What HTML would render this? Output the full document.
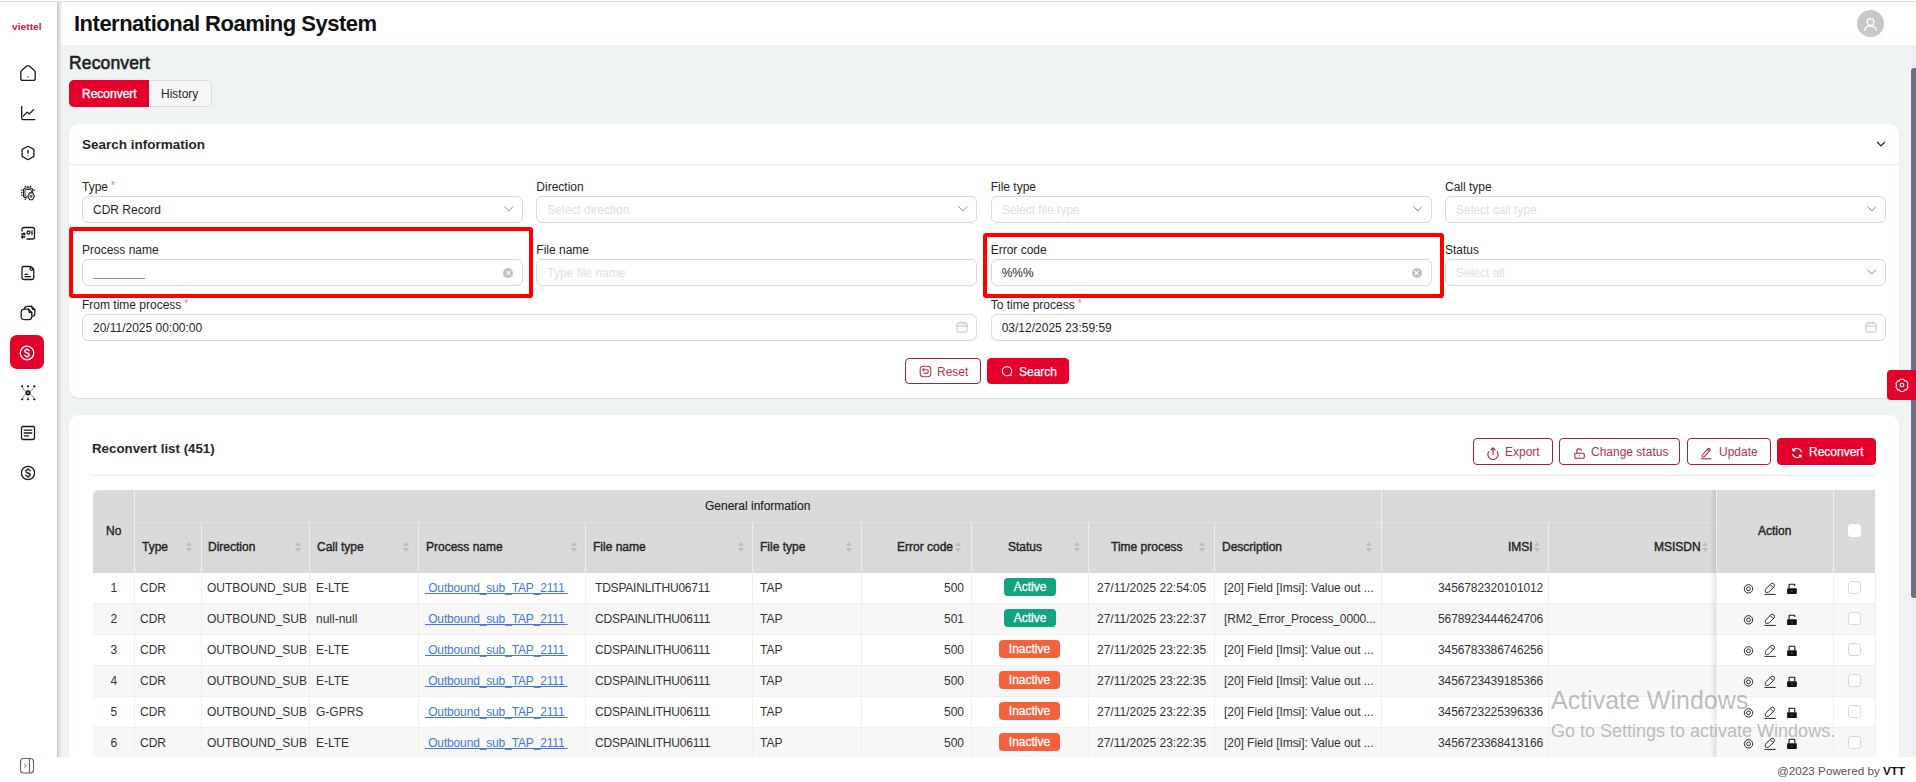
<!DOCTYPE html><html><head><meta charset="utf-8"><style>
*{box-sizing:border-box;margin:0;padding:0}
html,body{width:1916px;height:782px;overflow:hidden;background:#fff;font-family:"Liberation Sans",sans-serif;color:#262626}
.abs{position:absolute}
.t{position:absolute;white-space:nowrap;line-height:1}
.card{position:absolute;background:#fff;border-radius:10px;box-shadow:0 1px 1px rgba(0,0,0,0.09)}
.lbl{position:absolute;font-size:12px;color:#262626;white-space:nowrap;line-height:1}
.req{color:#ee7b7b;font-size:10px;margin-left:3px;position:relative;top:-2px}
.inp{position:absolute;height:27px;border:1px solid #d9d9d9;border-radius:6px;background:#fff;font-size:12px;color:#262626;white-space:nowrap}
.inp span{position:absolute;left:10px;top:7px;line-height:1}
.ph{color:#dde1e4}
.redbox{position:absolute;border:4px solid #fe0000;border-radius:3px}
.btn{position:absolute;height:27px;border-radius:4px;font-size:12px;white-space:nowrap}
.btn-o{border:1px solid #a0213b;color:#b3334d;background:#fff}
.btn-r{background:#e4002b;color:#fff;border:1px solid #e4002b}
.btn span{position:absolute;top:7px;line-height:1}
.chev{position:absolute;width:6px;height:6px;border-right:1px solid #8c8c8c;border-bottom:1px solid #8c8c8c;transform:rotate(45deg)}
.clr{position:absolute;width:10px;height:10px;border-radius:50%;background:#bfbfbf}
.clr:before,.clr:after{content:"";position:absolute;left:4.5px;top:2px;width:1px;height:6px;background:#fff;transform:rotate(45deg)}
.clr:after{transform:rotate(-45deg)}
.th{position:absolute;background:#dadada}
.td{position:absolute;font-size:12px;line-height:1;white-space:nowrap;color:#333}
.vl{position:absolute;width:1px;background:#efefef}
.hl{position:absolute;height:1px;background:#efefef}
.hvl{position:absolute;width:1px;background:#f0f0f0}
.hdr{position:absolute;font-size:12px;font-weight:normal;-webkit-text-stroke:0.4px #262626;line-height:1;white-space:nowrap;color:#262626}
.sort{position:absolute;width:6px;height:10px}
.sort:before{content:"";position:absolute;left:0;top:0;border-left:3px solid transparent;border-right:3px solid transparent;border-bottom:4px solid #bdbdbd}
.sort:after{content:"";position:absolute;left:0;top:6px;border-left:3px solid transparent;border-right:3px solid transparent;border-top:4px solid #bdbdbd}
.badge{position:absolute;height:18px;border-radius:4px;color:#fff;font-size:12px;line-height:19px;text-align:center;-webkit-text-stroke:0.3px #fff}
.act{background:#0fa57f}
.ina{background:#f5603d}
.lnk{color:#4477d6;text-decoration:underline}
.cb{position:absolute;width:13px;height:13px;border:1px solid #d9d9d9;border-radius:3px;background:#fff}
</style></head><body>
<div class="abs" style="left:0;top:1px;width:1916px;height:1px;background:#dcdcdc"></div>
<div class="abs" style="left:57px;top:45px;width:1859px;height:712px;background:#f0f3f3"></div>
<div class="abs" style="left:57px;top:2px;width:6px;height:780px;background:linear-gradient(to right,#bac1c6,#dde1e4 35%,rgba(240,243,243,0))"></div>
<div class="t" style="left:74px;top:13px;font-size:22px;letter-spacing:-0.5px;font-weight:bold;color:#111">International Roaming System</div>
<div class="t" style="left:69px;top:55px;font-size:17.5px;font-weight:normal;-webkit-text-stroke:0.6px #1f1f1f;letter-spacing:0.15px;color:#1f1f1f">Reconvert</div>
<div class="abs" style="left:69px;top:80px;width:143px;height:27px;border:1px solid #dcdcdc;border-radius:5px;background:#f6f7f8"></div>
<div class="abs" style="left:69px;top:80px;width:80px;height:27px;border-radius:5px 0 0 5px;background:#e4002b"></div>
<div class="t" style="left:82px;top:88px;font-size:12px;color:#fff;-webkit-text-stroke:0.35px #fff">Reconvert</div>
<div class="t" style="left:161px;top:88px;font-size:12px;color:#262626">History</div>
<div class="card" style="left:69px;top:124px;width:1830px;height:274px"></div>
<div class="t" style="left:82px;top:138px;font-size:13.5px;font-weight:bold;color:#262626">Search information</div>
<div class="abs" style="left:69px;top:164px;width:1830px;height:1px;background:#e6e6e6"></div>
<svg class="abs" style="left:1875px;top:138px" width="12" height="10" viewBox="0 0 12 10"><polyline points="2.2,4 6,8 9.8,4" fill="none" stroke="#262626" stroke-width="1.2"/></svg>
<div class="lbl" style="left:82px;top:181px">Type<span class="req">*</span></div>
<div class="inp" style="left:82px;top:196px;width:441px"><span>CDR Record</span></div>
<svg class="abs" style="left:503px;top:204px" width="12" height="10" viewBox="0 0 12 10"><polyline points="1.6,2.5 5.8,7 10,2.5" fill="none" stroke="#8c8c8c" stroke-width="1"/></svg>
<div class="lbl" style="left:536.3px;top:181px">Direction</div>
<div class="inp" style="left:536.3px;top:196px;width:441px"><span class="ph">Select direction</span></div>
<svg class="abs" style="left:957.3px;top:204px" width="12" height="10" viewBox="0 0 12 10"><polyline points="1.6,2.5 5.8,7 10,2.5" fill="none" stroke="#8c8c8c" stroke-width="1"/></svg>
<div class="lbl" style="left:990.7px;top:181px">File type</div>
<div class="inp" style="left:990.7px;top:196px;width:441px"><span class="ph">Select file type</span></div>
<svg class="abs" style="left:1411.7px;top:204px" width="12" height="10" viewBox="0 0 12 10"><polyline points="1.6,2.5 5.8,7 10,2.5" fill="none" stroke="#8c8c8c" stroke-width="1"/></svg>
<div class="lbl" style="left:1445px;top:181px">Call type</div>
<div class="inp" style="left:1445px;top:196px;width:441px"><span class="ph">Select call type</span></div>
<svg class="abs" style="left:1866px;top:204px" width="12" height="10" viewBox="0 0 12 10"><polyline points="1.6,2.5 5.8,7 10,2.5" fill="none" stroke="#8c8c8c" stroke-width="1"/></svg>
<div class="lbl" style="left:82px;top:244px">Process name</div>
<div class="inp" style="left:82px;top:259px;width:441px"><span></span></div>
<div class="clr" style="left:503px;top:268px"></div>
<div class="abs" style="left:93px;top:278px;width:52px;height:1px;background:#8c8c8c"></div>
<div class="lbl" style="left:536.3px;top:244px">File name</div>
<div class="inp" style="left:536.3px;top:259px;width:441px"><span class="ph">Type file name</span></div>
<div class="lbl" style="left:990.7px;top:244px">Error code</div>
<div class="inp" style="left:990.7px;top:259px;width:441px"><span>%%%</span></div>
<div class="clr" style="left:1411.7px;top:268px"></div>
<div class="lbl" style="left:1445px;top:244px">Status</div>
<div class="inp" style="left:1445px;top:259px;width:441px"><span class="ph">Select all</span></div>
<svg class="abs" style="left:1866px;top:267px" width="12" height="10" viewBox="0 0 12 10"><polyline points="1.6,2.5 5.8,7 10,2.5" fill="none" stroke="#8c8c8c" stroke-width="1"/></svg>
<div class="lbl" style="left:82px;top:299px">From time process<span class="req">*</span></div>
<div class="inp" style="left:82px;top:314px;width:895px"><span>20/11/2025 00:00:00</span></div>
<svg class="abs" style="left:956px;top:321px" width="12" height="12" viewBox="0 0 12 12"><rect x="1" y="2" width="10" height="9" rx="1" fill="none" stroke="#bfbfbf" stroke-width="1"/><line x1="1" y1="5" x2="11" y2="5" stroke="#bfbfbf"/><line x1="4" y1="0.5" x2="4" y2="3" stroke="#bfbfbf"/><line x1="8" y1="0.5" x2="8" y2="3" stroke="#bfbfbf"/></svg>
<div class="lbl" style="left:990.7px;top:299px">To time process<span class="req">*</span></div>
<div class="inp" style="left:990.7px;top:314px;width:895px"><span>03/12/2025 23:59:59</span></div>
<svg class="abs" style="left:1864.7px;top:321px" width="12" height="12" viewBox="0 0 12 12"><rect x="1" y="2" width="10" height="9" rx="1" fill="none" stroke="#bfbfbf" stroke-width="1"/><line x1="1" y1="5" x2="11" y2="5" stroke="#bfbfbf"/><line x1="4" y1="0.5" x2="4" y2="3" stroke="#bfbfbf"/><line x1="8" y1="0.5" x2="8" y2="3" stroke="#bfbfbf"/></svg>
<div class="redbox" style="left:69px;top:227px;width:464px;height:71px"></div>
<div class="redbox" style="left:983px;top:233px;width:461px;height:65px"></div>
<div class="btn btn-o" style="left:905px;top:358px;width:76px;height:26px"><svg class="abs" style="left:13px;top:6px" width="13" height="13" viewBox="0 0 13 13"><rect x="1.2" y="1.2" width="10.6" height="10.6" rx="3.2" fill="none" stroke="#b3334d" stroke-width="1.1"/><path d="M3.8 4.8H7.6Q9.3 4.8 9.3 6.6Q9.3 8.4 7.6 8.4H5.3M4.9 3.6L3.7 4.8 4.9 6" fill="none" stroke="#b3334d" stroke-width="1.1" stroke-linecap="round"/></svg><span style="left:31px">Reset</span></div>
<div class="btn btn-r" style="left:987px;top:358px;width:82px;height:26px"><svg class="abs" style="left:13px;top:6px" width="13" height="13" viewBox="0 0 13 13"><circle cx="6" cy="6.2" r="4.6" fill="none" stroke="#fff" stroke-width="1.1"/><path d="M9.4 9.6L10.8 11" stroke="#fff" stroke-width="1.1"/></svg><span style="left:31px;-webkit-text-stroke:0.25px #fff">Search</span></div>
<div class="card" style="left:69px;top:415px;width:1830px;height:360px"></div>
<div class="t" style="left:92px;top:442px;font-size:13.3px;font-weight:bold;color:#262626">Reconvert list (451)</div>
<div class="abs" style="left:92px;top:475px;width:1783px;height:1px;background:#e8e8e8"></div>
<div class="btn btn-o" style="left:1473px;top:438px;width:80px"><svg class="abs" style="left:13px;top:8px" width="12" height="13" viewBox="0 0 12 13"><path d="M6 7.6V0.9M3.9 3L6 0.9 8.1 3M1.8 4.6A5 5 0 1 0 10.2 4.6" fill="none" stroke="#a8283f" stroke-width="1.1" stroke-linecap="round"/></svg><span style="left:31px">Export</span></div>
<div class="btn btn-o" style="left:1559px;top:438px;width:121px"><svg class="abs" style="left:14px;top:9px" width="11" height="11" viewBox="0 0 11 11"><rect x="0.8" y="5.2" width="9.4" height="5" rx="0.8" fill="none" stroke="#a8283f" stroke-width="1.1"/><path d="M2.8 5.2V2.8Q2.8 0.9 5 0.9Q7.3 0.9 7.6 2.6" fill="none" stroke="#a8283f" stroke-width="1.1"/><rect x="5" y="7.3" width="1" height="1" fill="#a8283f"/></svg><span style="left:31px">Change status</span></div>
<div class="btn btn-o" style="left:1687px;top:438px;width:84px"><svg class="abs" style="left:12px;top:8px" width="13" height="13" viewBox="0 0 13 13"><path d="M2.2 9.6 Q1.6 8.8 2.3 8 L7.8 1.9 Q8.8 0.9 9.8 1.8 Q10.8 2.8 9.8 3.8 L4.2 9.7 Q3.2 10.4 2.2 9.6 Z M7.4 2.4 L9.3 4.3" fill="none" stroke="#a8283f" stroke-width="1.05"/><line x1="0.8" y1="11.8" x2="11.5" y2="11.8" stroke="#a8283f" stroke-width="1.05"/></svg><span style="left:31px">Update</span></div>
<div class="btn btn-r" style="left:1777px;top:438px;width:99px"><svg class="abs" style="left:13px;top:8px" width="12" height="12" viewBox="0 0 12 12"><path d="M10.4 4.6A4.8 4.8 0 0 0 2.2 3.2M1.6 7.4A4.8 4.8 0 0 0 9.8 8.8" fill="none" stroke="#fff" stroke-width="1.15" stroke-linecap="round"/><path d="M1.8 1.2V3.6H4.2M10.2 10.8V8.4H7.8" fill="none" stroke="#fff" stroke-width="1.15"/></svg><span style="left:31px;-webkit-text-stroke:0.25px #fff">Reconvert</span></div>
<div class="th" style="left:93px;top:490px;width:1782px;height:83px;border-radius:6px 0 0 0"></div>
<div class="abs" style="left:93px;top:573px;width:1782px;height:31px;background:#ffffff"></div>
<div class="hl" style="left:93px;top:603px;width:1782px"></div>
<div class="abs" style="left:93px;top:604px;width:1782px;height:31px;background:#f7f7f7"></div>
<div class="hl" style="left:93px;top:634px;width:1782px"></div>
<div class="abs" style="left:93px;top:635px;width:1782px;height:31px;background:#ffffff"></div>
<div class="hl" style="left:93px;top:665px;width:1782px"></div>
<div class="abs" style="left:93px;top:666px;width:1782px;height:31px;background:#f7f7f7"></div>
<div class="hl" style="left:93px;top:696px;width:1782px"></div>
<div class="abs" style="left:93px;top:697px;width:1782px;height:31px;background:#ffffff"></div>
<div class="hl" style="left:93px;top:727px;width:1782px"></div>
<div class="abs" style="left:93px;top:728px;width:1782px;height:31px;background:#f7f7f7"></div>
<div class="hl" style="left:93px;top:758px;width:1782px"></div>
<div class="abs" style="left:134.4px;top:522px;width:1581.6px;height:1px;background:#e3e3e3"></div>
<div class="abs" style="left:134.4px;top:490px;width:1px;height:83px;background:#eeeeee"></div>
<div class="abs" style="left:1381.1px;top:490px;width:1px;height:83px;background:#eeeeee"></div>
<div class="abs" style="left:1716px;top:490px;width:1px;height:83px;background:#eeeeee"></div>
<div class="abs" style="left:1833.3px;top:490px;width:1px;height:83px;background:#eeeeee"></div>
<div class="abs" style="left:201.1px;top:522px;width:1px;height:51px;background:#eeeeee"></div>
<div class="abs" style="left:309.4px;top:522px;width:1px;height:51px;background:#eeeeee"></div>
<div class="abs" style="left:418.3px;top:522px;width:1px;height:51px;background:#eeeeee"></div>
<div class="abs" style="left:585.4px;top:522px;width:1px;height:51px;background:#eeeeee"></div>
<div class="abs" style="left:752.4px;top:522px;width:1px;height:51px;background:#eeeeee"></div>
<div class="abs" style="left:861.3px;top:522px;width:1px;height:51px;background:#eeeeee"></div>
<div class="abs" style="left:970.6px;top:522px;width:1px;height:51px;background:#eeeeee"></div>
<div class="abs" style="left:1088.2px;top:522px;width:1px;height:51px;background:#eeeeee"></div>
<div class="abs" style="left:1214.3px;top:522px;width:1px;height:51px;background:#eeeeee"></div>
<div class="abs" style="left:1548.2px;top:522px;width:1px;height:51px;background:#eeeeee"></div>
<div class="vl" style="left:134.4px;top:573px;height:186px"></div>
<div class="vl" style="left:201.1px;top:573px;height:186px"></div>
<div class="vl" style="left:309.4px;top:573px;height:186px"></div>
<div class="vl" style="left:418.3px;top:573px;height:186px"></div>
<div class="vl" style="left:585.4px;top:573px;height:186px"></div>
<div class="vl" style="left:752.4px;top:573px;height:186px"></div>
<div class="vl" style="left:861.3px;top:573px;height:186px"></div>
<div class="vl" style="left:970.6px;top:573px;height:186px"></div>
<div class="vl" style="left:1088.2px;top:573px;height:186px"></div>
<div class="vl" style="left:1214.3px;top:573px;height:186px"></div>
<div class="vl" style="left:1381.1px;top:573px;height:186px"></div>
<div class="vl" style="left:1548.2px;top:573px;height:186px"></div>
<div class="vl" style="left:1716px;top:573px;height:186px"></div>
<div class="vl" style="left:1833.3px;top:573px;height:186px"></div>
<div class="vl" style="left:1875.2px;top:573px;height:186px"></div>
<div class="abs" style="left:1710px;top:490px;width:6px;height:269px;background:linear-gradient(to right,rgba(0,0,0,0),rgba(0,0,0,0.09))"></div>
<div class="hdr" style="left:705px;top:500px;-webkit-text-stroke:0.15px #1f1f1f;color:#1f1f1f">General information</div>
<div class="hdr" style="left:106px;top:525px">No</div>
<div class="hdr" style="left:1758px;top:525px">Action</div>
<div class="cb" style="left:1848px;top:524px;border-color:#fff"></div>
<div class="hdr" style="left:142px;top:541px">Type</div>
<div class="sort" style="left:186px;top:542px"></div>
<div class="hdr" style="left:208px;top:541px">Direction</div>
<div class="sort" style="left:295px;top:542px"></div>
<div class="hdr" style="left:317px;top:541px">Call type</div>
<div class="sort" style="left:403px;top:542px"></div>
<div class="hdr" style="left:426px;top:541px">Process name</div>
<div class="sort" style="left:571px;top:542px"></div>
<div class="hdr" style="left:593px;top:541px">File name</div>
<div class="sort" style="left:738px;top:542px"></div>
<div class="hdr" style="left:760px;top:541px">File type</div>
<div class="sort" style="left:846px;top:542px"></div>
<div class="hdr" style="left:897px;top:541px">Error code</div>
<div class="sort" style="left:955px;top:542px"></div>
<div class="hdr" style="left:1008px;top:541px">Status</div>
<div class="sort" style="left:1074px;top:542px"></div>
<div class="hdr" style="left:1111px;top:541px">Time process</div>
<div class="sort" style="left:1199px;top:542px"></div>
<div class="hdr" style="left:1222px;top:541px">Description</div>
<div class="sort" style="left:1366px;top:542px"></div>
<div class="hdr" style="left:1508px;top:541px">IMSI</div>
<div class="sort" style="left:1534px;top:542px"></div>
<div class="hdr" style="left:1654px;top:541px">MSISDN</div>
<div class="sort" style="left:1702px;top:542px"></div>
<div class="td" style="left:110.5px;top:582px">1</div>
<div class="td" style="left:140px;top:582px">CDR</div>
<div class="td" style="left:207px;top:582px">OUTBOUND_SUB</div>
<div class="td" style="left:316px;top:582px">E-LTE</div>
<div class="td lnk" style="left:425px;top:582px;letter-spacing:-0.15px">&nbsp;Outbound_sub_TAP_2111&nbsp;</div>
<div class="td" style="left:595px;top:582px;letter-spacing:-0.2px">TDSPAINLITHU06711</div>
<div class="td" style="left:760px;top:582px">TAP</div>
<div class="td" style="left:944px;top:582px">500</div>
<div class="badge act" style="left:1004px;top:578px;width:52px">Active</div>
<div class="td" style="left:1097px;top:582px">27/11/2025 22:54:05</div>
<div class="td" style="left:1224px;top:582px;letter-spacing:-0.05px">[20] Field [Imsi]: Value out ...</div>
<div class="td" style="left:1438px;top:582px;letter-spacing:-0.1px">3456782320101012</div>
<svg class="abs" style="left:1738px;top:578px" width="64" height="22" viewBox="0 0 64 22"><circle cx="10.5" cy="10.85" r="4.2" fill="none" stroke="#1f1f1f" stroke-width="0.95"/><circle cx="10.5" cy="10.85" r="1.9" fill="none" stroke="#1f1f1f" stroke-width="0.95"/><path d="M28.3 14.4 Q27.3 14.4 27.3 13.4 L27.3 12.2 Q27.3 11.5 27.8 11 L32.7 5.9 Q34.3 4.5 35.9 5.9 Q37.3 7.4 35.9 9 L31 13.9 Q30.5 14.4 29.8 14.4 Z M32.5 6.9 L35 9.4" fill="none" stroke="#1f1f1f" stroke-width="0.95" stroke-linejoin="round"/><line x1="26.4" y1="16.4" x2="37.7" y2="16.4" stroke="#1f1f1f" stroke-width="0.95"/><path d="M51.1 10.3V6.7Q51.1 6.2 51.6 6.2H56.3Q56.8 6.2 56.8 6.7V8.1" fill="none" stroke="#111" stroke-width="1.1"/><rect x="49.1" y="10.2" width="9.7" height="5.8" rx="0.7" fill="#111"/><rect x="53.3" y="12.6" width="1.2" height="1.2" fill="#777"/></svg>
<div class="cb" style="left:1848px;top:581px"></div>
<div class="td" style="left:110.5px;top:613px">2</div>
<div class="td" style="left:140px;top:613px">CDR</div>
<div class="td" style="left:207px;top:613px">OUTBOUND_SUB</div>
<div class="td" style="left:316px;top:613px">null-null</div>
<div class="td lnk" style="left:425px;top:613px;letter-spacing:-0.15px">&nbsp;Outbound_sub_TAP_2111&nbsp;</div>
<div class="td" style="left:595px;top:613px;letter-spacing:-0.2px">CDSPAINLITHU06111</div>
<div class="td" style="left:760px;top:613px">TAP</div>
<div class="td" style="left:944px;top:613px">501</div>
<div class="badge act" style="left:1004px;top:609px;width:52px">Active</div>
<div class="td" style="left:1097px;top:613px">27/11/2025 23:22:37</div>
<div class="td" style="left:1224px;top:613px;letter-spacing:-0.15px">[RM2_Error_Process_0000...</div>
<div class="td" style="left:1438px;top:613px;letter-spacing:-0.1px">5678923444624706</div>
<svg class="abs" style="left:1738px;top:609px" width="64" height="22" viewBox="0 0 64 22"><circle cx="10.5" cy="10.85" r="4.2" fill="none" stroke="#1f1f1f" stroke-width="0.95"/><circle cx="10.5" cy="10.85" r="1.9" fill="none" stroke="#1f1f1f" stroke-width="0.95"/><path d="M28.3 14.4 Q27.3 14.4 27.3 13.4 L27.3 12.2 Q27.3 11.5 27.8 11 L32.7 5.9 Q34.3 4.5 35.9 5.9 Q37.3 7.4 35.9 9 L31 13.9 Q30.5 14.4 29.8 14.4 Z M32.5 6.9 L35 9.4" fill="none" stroke="#1f1f1f" stroke-width="0.95" stroke-linejoin="round"/><line x1="26.4" y1="16.4" x2="37.7" y2="16.4" stroke="#1f1f1f" stroke-width="0.95"/><path d="M51.1 10.3V6.7Q51.1 6.2 51.6 6.2H56.3Q56.8 6.2 56.8 6.7V8.1" fill="none" stroke="#111" stroke-width="1.1"/><rect x="49.1" y="10.2" width="9.7" height="5.8" rx="0.7" fill="#111"/><rect x="53.3" y="12.6" width="1.2" height="1.2" fill="#777"/></svg>
<div class="cb" style="left:1848px;top:612px"></div>
<div class="td" style="left:110.5px;top:644px">3</div>
<div class="td" style="left:140px;top:644px">CDR</div>
<div class="td" style="left:207px;top:644px">OUTBOUND_SUB</div>
<div class="td" style="left:316px;top:644px">E-LTE</div>
<div class="td lnk" style="left:425px;top:644px;letter-spacing:-0.15px">&nbsp;Outbound_sub_TAP_2111&nbsp;</div>
<div class="td" style="left:595px;top:644px;letter-spacing:-0.2px">CDSPAINLITHU06111</div>
<div class="td" style="left:760px;top:644px">TAP</div>
<div class="td" style="left:944px;top:644px">500</div>
<div class="badge ina" style="left:999px;top:640px;width:61px">Inactive</div>
<div class="td" style="left:1097px;top:644px">27/11/2025 23:22:35</div>
<div class="td" style="left:1224px;top:644px;letter-spacing:-0.05px">[20] Field [Imsi]: Value out ...</div>
<div class="td" style="left:1438px;top:644px;letter-spacing:-0.1px">3456783386746256</div>
<svg class="abs" style="left:1738px;top:640px" width="64" height="22" viewBox="0 0 64 22"><circle cx="10.5" cy="10.85" r="4.2" fill="none" stroke="#1f1f1f" stroke-width="0.95"/><circle cx="10.5" cy="10.85" r="1.9" fill="none" stroke="#1f1f1f" stroke-width="0.95"/><path d="M28.3 14.4 Q27.3 14.4 27.3 13.4 L27.3 12.2 Q27.3 11.5 27.8 11 L32.7 5.9 Q34.3 4.5 35.9 5.9 Q37.3 7.4 35.9 9 L31 13.9 Q30.5 14.4 29.8 14.4 Z M32.5 6.9 L35 9.4" fill="none" stroke="#1f1f1f" stroke-width="0.95" stroke-linejoin="round"/><line x1="26.4" y1="16.4" x2="37.7" y2="16.4" stroke="#1f1f1f" stroke-width="0.95"/><path d="M51.1 10.3V6.7Q51.1 6.2 51.6 6.2H56.3Q56.8 6.2 56.8 6.7V10.3" fill="none" stroke="#111" stroke-width="1.1"/><rect x="49.1" y="10.2" width="9.7" height="5.8" rx="0.7" fill="#111"/><rect x="53.3" y="12.6" width="1.2" height="1.2" fill="#777"/></svg>
<div class="cb" style="left:1848px;top:643px"></div>
<div class="td" style="left:110.5px;top:675px">4</div>
<div class="td" style="left:140px;top:675px">CDR</div>
<div class="td" style="left:207px;top:675px">OUTBOUND_SUB</div>
<div class="td" style="left:316px;top:675px">E-LTE</div>
<div class="td lnk" style="left:425px;top:675px;letter-spacing:-0.15px">&nbsp;Outbound_sub_TAP_2111&nbsp;</div>
<div class="td" style="left:595px;top:675px;letter-spacing:-0.2px">CDSPAINLITHU06111</div>
<div class="td" style="left:760px;top:675px">TAP</div>
<div class="td" style="left:944px;top:675px">500</div>
<div class="badge ina" style="left:999px;top:671px;width:61px">Inactive</div>
<div class="td" style="left:1097px;top:675px">27/11/2025 23:22:35</div>
<div class="td" style="left:1224px;top:675px;letter-spacing:-0.05px">[20] Field [Imsi]: Value out ...</div>
<div class="td" style="left:1438px;top:675px;letter-spacing:-0.1px">3456723439185366</div>
<svg class="abs" style="left:1738px;top:671px" width="64" height="22" viewBox="0 0 64 22"><circle cx="10.5" cy="10.85" r="4.2" fill="none" stroke="#1f1f1f" stroke-width="0.95"/><circle cx="10.5" cy="10.85" r="1.9" fill="none" stroke="#1f1f1f" stroke-width="0.95"/><path d="M28.3 14.4 Q27.3 14.4 27.3 13.4 L27.3 12.2 Q27.3 11.5 27.8 11 L32.7 5.9 Q34.3 4.5 35.9 5.9 Q37.3 7.4 35.9 9 L31 13.9 Q30.5 14.4 29.8 14.4 Z M32.5 6.9 L35 9.4" fill="none" stroke="#1f1f1f" stroke-width="0.95" stroke-linejoin="round"/><line x1="26.4" y1="16.4" x2="37.7" y2="16.4" stroke="#1f1f1f" stroke-width="0.95"/><path d="M51.1 10.3V6.7Q51.1 6.2 51.6 6.2H56.3Q56.8 6.2 56.8 6.7V10.3" fill="none" stroke="#111" stroke-width="1.1"/><rect x="49.1" y="10.2" width="9.7" height="5.8" rx="0.7" fill="#111"/><rect x="53.3" y="12.6" width="1.2" height="1.2" fill="#777"/></svg>
<div class="cb" style="left:1848px;top:674px"></div>
<div class="td" style="left:110.5px;top:706px">5</div>
<div class="td" style="left:140px;top:706px">CDR</div>
<div class="td" style="left:207px;top:706px">OUTBOUND_SUB</div>
<div class="td" style="left:316px;top:706px">G-GPRS</div>
<div class="td lnk" style="left:425px;top:706px;letter-spacing:-0.15px">&nbsp;Outbound_sub_TAP_2111&nbsp;</div>
<div class="td" style="left:595px;top:706px;letter-spacing:-0.2px">CDSPAINLITHU06111</div>
<div class="td" style="left:760px;top:706px">TAP</div>
<div class="td" style="left:944px;top:706px">500</div>
<div class="badge ina" style="left:999px;top:702px;width:61px">Inactive</div>
<div class="td" style="left:1097px;top:706px">27/11/2025 23:22:35</div>
<div class="td" style="left:1224px;top:706px;letter-spacing:-0.05px">[20] Field [Imsi]: Value out ...</div>
<div class="td" style="left:1438px;top:706px;letter-spacing:-0.1px">3456723225396336</div>
<svg class="abs" style="left:1738px;top:702px" width="64" height="22" viewBox="0 0 64 22"><circle cx="10.5" cy="10.85" r="4.2" fill="none" stroke="#1f1f1f" stroke-width="0.95"/><circle cx="10.5" cy="10.85" r="1.9" fill="none" stroke="#1f1f1f" stroke-width="0.95"/><path d="M28.3 14.4 Q27.3 14.4 27.3 13.4 L27.3 12.2 Q27.3 11.5 27.8 11 L32.7 5.9 Q34.3 4.5 35.9 5.9 Q37.3 7.4 35.9 9 L31 13.9 Q30.5 14.4 29.8 14.4 Z M32.5 6.9 L35 9.4" fill="none" stroke="#1f1f1f" stroke-width="0.95" stroke-linejoin="round"/><line x1="26.4" y1="16.4" x2="37.7" y2="16.4" stroke="#1f1f1f" stroke-width="0.95"/><path d="M51.1 10.3V6.7Q51.1 6.2 51.6 6.2H56.3Q56.8 6.2 56.8 6.7V10.3" fill="none" stroke="#111" stroke-width="1.1"/><rect x="49.1" y="10.2" width="9.7" height="5.8" rx="0.7" fill="#111"/><rect x="53.3" y="12.6" width="1.2" height="1.2" fill="#777"/></svg>
<div class="cb" style="left:1848px;top:705px"></div>
<div class="td" style="left:110.5px;top:737px">6</div>
<div class="td" style="left:140px;top:737px">CDR</div>
<div class="td" style="left:207px;top:737px">OUTBOUND_SUB</div>
<div class="td" style="left:316px;top:737px">E-LTE</div>
<div class="td lnk" style="left:425px;top:737px;letter-spacing:-0.15px">&nbsp;Outbound_sub_TAP_2111&nbsp;</div>
<div class="td" style="left:595px;top:737px;letter-spacing:-0.2px">CDSPAINLITHU06111</div>
<div class="td" style="left:760px;top:737px">TAP</div>
<div class="td" style="left:944px;top:737px">500</div>
<div class="badge ina" style="left:999px;top:733px;width:61px">Inactive</div>
<div class="td" style="left:1097px;top:737px">27/11/2025 23:22:35</div>
<div class="td" style="left:1224px;top:737px;letter-spacing:-0.05px">[20] Field [Imsi]: Value out ...</div>
<div class="td" style="left:1438px;top:737px;letter-spacing:-0.1px">3456723368413166</div>
<svg class="abs" style="left:1738px;top:733px" width="64" height="22" viewBox="0 0 64 22"><circle cx="10.5" cy="10.85" r="4.2" fill="none" stroke="#1f1f1f" stroke-width="0.95"/><circle cx="10.5" cy="10.85" r="1.9" fill="none" stroke="#1f1f1f" stroke-width="0.95"/><path d="M28.3 14.4 Q27.3 14.4 27.3 13.4 L27.3 12.2 Q27.3 11.5 27.8 11 L32.7 5.9 Q34.3 4.5 35.9 5.9 Q37.3 7.4 35.9 9 L31 13.9 Q30.5 14.4 29.8 14.4 Z M32.5 6.9 L35 9.4" fill="none" stroke="#1f1f1f" stroke-width="0.95" stroke-linejoin="round"/><line x1="26.4" y1="16.4" x2="37.7" y2="16.4" stroke="#1f1f1f" stroke-width="0.95"/><path d="M51.1 10.3V6.7Q51.1 6.2 51.6 6.2H56.3Q56.8 6.2 56.8 6.7V10.3" fill="none" stroke="#111" stroke-width="1.1"/><rect x="49.1" y="10.2" width="9.7" height="5.8" rx="0.7" fill="#111"/><rect x="53.3" y="12.6" width="1.2" height="1.2" fill="#777"/></svg>
<div class="cb" style="left:1848px;top:736px"></div>
<div class="abs" style="left:57px;top:757px;width:1859px;height:25px;background:#fff"></div>
<div class="t" style="left:1777px;top:765px;font-size:11.7px;color:#555">@2023 Powered by <b style="color:#111">VTT</b></div>
<div class="abs" style="left:1911px;top:45px;width:5px;height:712px;background:#eceff1"></div>
<div class="abs" style="left:1911px;top:68px;width:5px;height:530px;background:#6b6f8c;border-radius:3px 0 0 3px"></div>
<svg class="abs" style="left:11px;top:20px" width="34" height="14" viewBox="0 0 34 14"><text x="1" y="10" font-family="Liberation Sans" font-size="8.6" font-weight="bold" fill="#c8203f" textLength="29.6" lengthAdjust="spacingAndGlyphs">viettel</text></svg>
<div class="abs" style="left:10px;top:335px;width:34px;height:34px;background:#e4002b;border-radius:7px"></div>
<svg class="abs" style="left:19px;top:64px" width="18" height="18" viewBox="0 0 18 18"><path d="M1.8 8.2 Q1.8 7 2.8 6.2 L7.8 2 Q9 1.1 10.2 2 L15.2 6.2 Q16.2 7 16.2 8.2 V14.5 Q16.2 16.4 14.3 16.4 H3.7 Q1.8 16.4 1.8 14.5 Z" fill="none" stroke="#1a1a1a" stroke-width="1.3" stroke-linecap="round" stroke-linejoin="round"/><line x1="9" y1="12.2" x2="9" y2="13.4" stroke="#555" stroke-width="1.4"/></svg>
<svg class="abs" style="left:20px;top:105px" width="16" height="16" viewBox="0 0 16 16"><path d="M1.7 1.5 V13.3 Q1.7 14.6 3 14.6 H14.8" fill="none" stroke="#1a1a1a" stroke-width="1.3" stroke-linecap="round" stroke-linejoin="round"/><path d="M3.4 11 L6.6 7.6 Q7.2 7 7.8 7.6 L8.8 8.4 Q9.4 8.9 10 8.3 L13.6 4.6" fill="none" stroke="#1a1a1a" stroke-width="1.3" stroke-linecap="round" stroke-linejoin="round"/></svg>
<svg class="abs" style="left:20px;top:145px" width="16" height="16" viewBox="0 0 16 16"><path d="M8 1.2 L13.9 4.4 V11.4 L8 14.7 L2.1 11.4 V4.4 Z" fill="none" stroke="#1a1a1a" stroke-width="1.3" stroke-linecap="round" stroke-linejoin="round"/><line x1="8" y1="4.8" x2="8" y2="8.6" stroke="#1a1a1a" stroke-width="1.4"/><line x1="8" y1="10.4" x2="8" y2="11.2" stroke="#1a1a1a" stroke-width="1.4"/></svg>
<svg class="abs" style="left:20px;top:185px" width="16" height="16" viewBox="0 0 16 16"><rect x="3.5" y="3" width="9.3" height="9.8" rx="2.6" fill="none" stroke="#1a1a1a" stroke-width="1.1"/><rect x="5" y="4.5" width="6.4" height="6.8" rx="1.4" fill="none" stroke="#1a1a1a" stroke-width="0.9"/><g fill="#1a1a1a"><circle cx="5.4" cy="1.6" r="0.8"/><circle cx="7.9" cy="1.6" r="0.8"/><circle cx="10.4" cy="1.6" r="0.8"/><circle cx="1.7" cy="5.3" r="0.8"/><circle cx="1.7" cy="7.8" r="0.8"/><circle cx="1.7" cy="10.2" r="0.8"/><circle cx="14.2" cy="5.3" r="0.8"/><circle cx="5.4" cy="14.2" r="0.8"/></g><circle cx="11.1" cy="11.3" r="4" fill="#fff"/><path d="M9.6 7.9 H12.6 L14.4 11.3 L12.6 14.7 H9.6 L7.8 11.3 Z" fill="none" stroke="#1a1a1a" stroke-width="1.1" stroke-linejoin="round"/><circle cx="11.1" cy="11.3" r="1" fill="none" stroke="#1a1a1a" stroke-width="1"/></svg>
<svg class="abs" style="left:20px;top:226px" width="16" height="15" viewBox="0 0 16 15"><path d="M2 5 V3.5 Q2 1.5 4 1.5 H12.5 Q14.5 1.5 14.5 3.5 V11 Q14.5 13 12.5 13 H7" fill="none" stroke="#1a1a1a" stroke-width="1.3" stroke-linecap="round" stroke-linejoin="round"/><circle cx="8.5" cy="6.5" r="1.5" fill="none" stroke="#1a1a1a" stroke-width="1.3" stroke-linecap="round" stroke-linejoin="round"/><line x1="12" y1="5" x2="12" y2="8.5" fill="none" stroke="#1a1a1a" stroke-width="1.3" stroke-linecap="round" stroke-linejoin="round"/><path d="M1.5 8 H5 M1.5 11 H5 M4 7 L5 8 L4 9 M2.5 10 L1.5 11 L2.5 12" fill="none" stroke="#1a1a1a" stroke-width="1.3" stroke-linecap="round" stroke-linejoin="round"/></svg>
<svg class="abs" style="left:20px;top:265px" width="16" height="16" viewBox="0 0 16 16"><path d="M3 1.5 H10.5 L13.8 4.8 V12.5 Q13.8 14.5 11.8 14.5 H4 Q2 14.5 2 12.5 V3.5 Q2 1.5 4 1.5 Z" fill="none" stroke="#1a1a1a" stroke-width="1.3" stroke-linecap="round" stroke-linejoin="round"/><circle cx="11.5" cy="3.8" r="1.5" fill="none" stroke="#1a1a1a" stroke-width="1.3" stroke-linecap="round" stroke-linejoin="round"/><line x1="5" y1="9.3" x2="7.5" y2="9.3" fill="none" stroke="#1a1a1a" stroke-width="1.3" stroke-linecap="round" stroke-linejoin="round"/><line x1="5" y1="11.6" x2="10.5" y2="11.6" fill="none" stroke="#1a1a1a" stroke-width="1.3" stroke-linecap="round" stroke-linejoin="round"/></svg>
<svg class="abs" style="left:20px;top:305px" width="16" height="16" viewBox="0 0 16 16"><path d="M7.4 1.3 H11.4 L14.8 4.7 V8.6 Q14.8 11.2 12.4 11.3 M4.4 4.1 Q4.6 1.3 7.4 1.3" fill="none" stroke="#1a1a1a" stroke-width="1.3" stroke-linecap="round" stroke-linejoin="round"/><path d="M11.4 1.3 L12.8 4.4 L14.8 4.7" fill="none" stroke="#1a1a1a" stroke-width="1.3" stroke-linecap="round" stroke-linejoin="round" stroke-width="1"/><path d="M4.4 4.2 H8.5 L11.8 7.5 V11.6 Q11.8 14.6 8.8 14.6 H4.2 Q1.2 14.6 1.2 11.6 V7.2 Q1.2 4.2 4.4 4.2 Z" fill="#fff" stroke="#1a1a1a" stroke-width="1.3" stroke-linejoin="round"/><path d="M8.5 4.2 L9.2 7.3 L11.8 7.5" fill="none" stroke="#1a1a1a" stroke-width="1.3" stroke-linecap="round" stroke-linejoin="round" stroke-width="1"/></svg>
<svg class="abs" style="left:19px;top:345px" width="16" height="16" viewBox="0 0 16 16"><circle cx="8" cy="8" r="6.8" fill="none" stroke="#fff" stroke-width="1.3"/><path d="M10.2 5.6 Q9.6 4.6 8 4.6 Q5.8 4.6 5.8 6.2 Q5.8 7.6 8 8 Q10.3 8.4 10.3 9.8 Q10.3 11.4 8 11.4 Q6.3 11.4 5.7 10.3 M8 3.6 V4.6 M8 11.4 V12.4" fill="none" stroke="#fff" stroke-width="1.3" stroke-linecap="round"/></svg>
<svg class="abs" style="left:20px;top:384px" width="16" height="18" viewBox="0 0 16 18"><circle cx="8" cy="8.8" r="1.9" fill="#888" stroke="#111" stroke-width="1.5"/><g fill="#111"><path d="M0.6 2.2 L2.6 1 L3.4 2.2 L2.6 3.4 Z"/><path d="M6.5 2.2 L8.5 1 L9.3 2.2 L8.5 3.4 Z"/><path d="M12.7 2.2 L14.7 1 L15.5 2.2 L14.7 3.4 Z"/><path d="M0.6 15.3 L2.6 14.1 L3.4 15.3 L2.6 16.5 Z"/><path d="M6.5 15.3 L8.5 14.1 L9.3 15.3 L8.5 16.5 Z"/><path d="M12.7 15.3 L14.7 14.1 L15.5 15.3 L14.7 16.5 Z"/></g><path d="M6.2 7.4 Q3 6.5 2.6 3.4 M9.8 7.4 Q13 6.5 13.9 3.4 M6.2 10.2 Q3 11.1 2.6 14.1 M9.8 10.2 Q13 11.1 13.9 14.1 M8 3.4 V4.6 M8 13 V14.1" fill="none" stroke="#8a8a8a" stroke-width="1"/></svg>
<svg class="abs" style="left:20px;top:425px" width="16" height="16" viewBox="0 0 16 16"><rect x="1.5" y="1.5" width="13" height="13" rx="1.5" fill="none" stroke="#1a1a1a" stroke-width="1.3" stroke-linecap="round" stroke-linejoin="round"/><line x1="4.3" y1="5.2" x2="11.7" y2="5.2" fill="none" stroke="#1a1a1a" stroke-width="1.3" stroke-linecap="round" stroke-linejoin="round"/><line x1="4.3" y1="8" x2="11.7" y2="8" fill="none" stroke="#1a1a1a" stroke-width="1.3" stroke-linecap="round" stroke-linejoin="round"/><line x1="4.3" y1="10.8" x2="8.5" y2="10.8" fill="none" stroke="#1a1a1a" stroke-width="1.3" stroke-linecap="round" stroke-linejoin="round"/></svg>
<svg class="abs" style="left:20px;top:465px" width="16" height="16" viewBox="0 0 16 16"><circle cx="8" cy="8" r="6.6" fill="none" stroke="#1a1a1a" stroke-width="1.3" stroke-linecap="round" stroke-linejoin="round"/><path d="M10.2 5.6 Q9.6 4.6 8 4.6 Q5.8 4.6 5.8 6.2 Q5.8 7.6 8 8 Q10.3 8.4 10.3 9.8 Q10.3 11.4 8 11.4 Q6.3 11.4 5.7 10.3 M8 3.6 V4.6 M8 11.4 V12.4" fill="none" stroke="#1a1a1a" stroke-width="1.3" stroke-linecap="round" stroke-linejoin="round"/></svg>
<svg class="abs" style="left:19px;top:757px" width="16" height="17" viewBox="0 0 16 17"><rect x="1.5" y="1.5" width="13" height="14.5" rx="3" fill="none" stroke="#5b5f77" stroke-width="1.1"/><line x1="10.5" y1="1.5" x2="10.5" y2="16" stroke="#5b5f77" stroke-width="1.1"/><path d="M5.5 7 L7 8.75 L5.5 10.5" fill="none" stroke="#5b5f77" stroke-width="1"/></svg>
<div class="abs" style="left:1857px;top:10px;width:27px;height:27px;border-radius:50%;background:#c8c8c8"></div>
<svg class="abs" style="left:1861px;top:15px" width="19" height="19" viewBox="0 0 19 19"><circle cx="9.5" cy="7" r="3.3" fill="none" stroke="#fff" stroke-width="1.3"/><path d="M3.5 16 Q4 11.2 9.5 11.2 Q15 11.2 15.5 16" fill="none" stroke="#fff" stroke-width="1.3"/></svg>
<div class="abs" style="left:1887px;top:370px;width:29px;height:30px;background:#e4002b;border-radius:4px 0 0 4px"></div>
<svg class="abs" style="left:1894px;top:377px" width="16" height="16" viewBox="0 0 16 16"><circle cx="8" cy="8" r="1.8" fill="none" stroke="#fff" stroke-width="1.1"/><path d="M6.3 2.3 L9.7 2.3 L10.6 3.9 L12.4 3.9 L14.1 6.8 L13.2 8.4 L14.1 10 L12.4 12.9 L10.6 12.9 L9.7 14.5 L6.3 14.5 L5.4 12.9 L3.6 12.9 L1.9 10 L2.8 8.4 L1.9 6.8 L3.6 3.9 L5.4 3.9 Z" fill="none" stroke="#fff" stroke-width="1.1" stroke-linejoin="round"/></svg>
<div class="t" style="left:1551px;top:688px;font-size:25px;color:rgba(160,160,160,0.7)">Activate Windows</div>
<div class="t" style="left:1551px;top:722px;font-size:18px;color:rgba(160,160,160,0.7)">Go to Settings to activate Windows.</div>
</body></html>
